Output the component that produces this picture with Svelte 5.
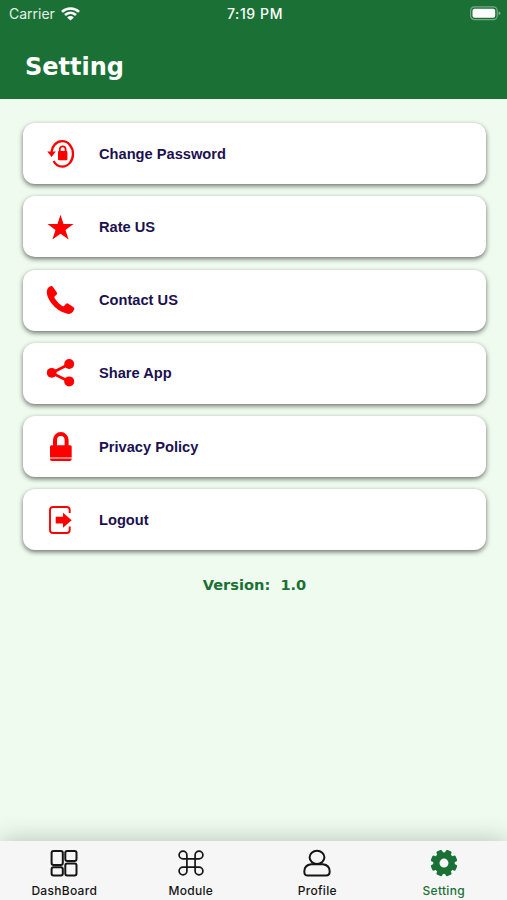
<script>
  let active = 'Setting';

  const options = [
    { icon: 'password', label: 'Change Password' },
    { icon: 'star', label: 'Rate US' },
    { icon: 'phone', label: 'Contact US' },
    { icon: 'share', label: 'Share App' },
    { icon: 'lock', label: 'Privacy Policy' },
    { icon: 'logout', label: 'Logout' }
  ];

  const tabs = ['DashBoard', 'Module', 'Profile', 'Setting'];
</script>

<div class="screen">
  <header>
    <div class="status">
      <div class="carrier">
        <span>Carrier</span>
        <svg width="19" height="14" viewBox="0 0 18 14" preserveAspectRatio="none" fill="none" stroke="#fff" stroke-width="2.5">
          <path d="M.9 4.9C5.5.5 12.5.5 17.1 4.9M3.8 8C7 5 11 5 14.2 8" />
          <path d="M9 13.600L5.800 10.400Q9 7.800 12.200 10.400Z" fill="#fff" stroke="none" />
        </svg>
      </div>
      <time>7:19 PM</time>
      <svg class="battery" width="31" height="15" viewBox="0 0 31 15">
        <rect x=".6" y=".8" width="26.6" height="12.8" rx="3.8" fill="none" stroke="#fff" stroke-opacity=".4" stroke-width="1.2" />
        <rect x="2.5" y="2.7" width="22.7" height="9" rx="2" fill="#fff" />
        <path d="M28.6 5.2Q30.3 6 30.3 7.2T28.6 9.2Z" fill="#fff" fill-opacity=".5" />
      </svg>
    </div>
    <h1>Setting</h1>
  </header>

  <main>
    {#each options as option}
    <button class="option">
      <svg width="30" height="30" viewBox="0 0 30 30" fill="red">
        {#if option.icon == 'password'}
        <path d="M5.500 13C6 7 10.500 2.200 16.300 2.200C22.200 2.200 27 7.900 27 14.900S22.200 27.600 16.300 27.600C12.600 27.600 9.400 25.500 7.600 22" fill="none" stroke="red" stroke-width="2.300" />
        <path d="M1.300 12.500H9.800L5.600 18Z" />
        <rect x="12" y="12" width="9.400" height="9.300" rx="1" />
        <path d="M13.800 12.500V10.200A2.900 2.900 0 0 1 19.600 10.200V12.500" fill="none" stroke="red" stroke-width="1.800" />
        {:else if option.icon == 'star'}
        <path d="M14.500 2.700L17.500 12H27.500L19.500 17.900L22.600 27.600L14.500 21.700L6.400 27.600L9.500 17.900L1.500 12H11.500Z" />
        {:else if option.icon == 'phone'}
        <path d="M2.700 2.300L4.500 1.200Q6 .6 7 2L10.700 7.200Q11.600 8.700 10.300 9.900L8.700 11.300Q8 12.300 8.800 13.600Q11.800 18.300 16.200 21Q17.400 21.600 18.300 20.700L19.900 18.900Q21 17.900 22.400 18.700L27.600 22.200Q28.900 23.300 28.100 24.700L26.700 26.900Q24.700 29.300 21.400 28.800Q12 27 5.200 18.100Q1.100 12.300.7 6.900Q.7 4 2.700 2.300Z" />
        {:else if option.icon == 'share'}
        <path d="M23.300 6L5.700 15L23.300 23.500" fill="none" stroke="red" stroke-width="2.700" />
        <circle cx="5.700" cy="14.800" r="4.900" />
        <circle cx="23.200" cy="6" r="5" />
        <circle cx="23.200" cy="23.400" r="5" />
        {:else if option.icon == 'lock'}
        <path d="M9 15V8A5.700 5.800 0 0 1 20.600 8V15" fill="none" stroke="red" stroke-width="4" />
        <path d="M5.500 13.300H24.200Q25.700 13.300 25.700 14.800V25.500H4V14.800Q4 13.300 5.500 13.300ZM4 26.600H25.700V27Q25.700 29 23.700 29H6Q4 29 4 27Z" />
        {:else}
        <path d="M23.700 8V5Q23.700 2 20.700 2H7Q4 2 4 5V25Q4 28 7 28H20.700Q23.700 28 23.700 25V21.500" fill="none" stroke="red" stroke-width="1.900" />
        <path d="M9.700 11.700H17V7.700L25.700 15.200L17 22.700V18.400H9.700Z" />
        {/if}
      </svg>
      <span>{option.label}</span>
    </button>
    {/each}
    <p class="version">Version:&nbsp; 1.0</p>
  </main>

  <nav>
    {#each tabs as tab}
    <button class="tab" class:active={tab == active} on:click={() => active = tab}>
      <svg width="28" height="28" viewBox="0 0 28 28" fill="none" stroke="currentColor" stroke-width="2">
        {#if tab == 'DashBoard'}
        <rect x="1.600" y="1.900" width="11.200" height="14" rx="1.900" />
        <rect x="15.300" y="1.900" width="11.200" height="10.100" rx="1.900" />
        <rect x="1.600" y="18.200" width="11.200" height="8.300" rx="1.900" />
        <rect x="15.300" y="14.400" width="11.200" height="12.100" rx="1.900" />
        {:else if tab == 'Module'}
        <path d="M9.900 9.900H18.100V18.100H9.900ZM9.900 9.900V6A3.900 3.900 0 1 0 6 9.900H9.900M18.100 9.900H22A3.900 3.900 0 1 0 18.100 6V9.900M18.100 18.100V22A3.900 3.900 0 1 0 22 18.100H18.100M9.900 18.100H6A3.900 3.900 0 1 0 9.900 22V18.100" stroke-width="1.700" />
        {:else if tab == 'Profile'}
        <ellipse cx="14" cy="8.300" rx="7.400" ry="6.600" />
        <path d="M8.200 15.300H19.800C24 15.800 26.700 18.300 26.700 22.500C26.700 25.500 25.700 26.500 23 26.500H5C2.300 26.500 1.300 25.500 1.300 22.500C1.300 18.300 4 15.800 8.200 15.300Z" />
        {:else}
        <g fill="currentColor" stroke="none">
          <path fill-rule="evenodd" d="M14 3.300A10.800 10.800 0 1 0 14 24.900A10.800 10.800 0 1 0 14 3.300ZM14 9.600A4.500 4.500 0 1 1 14 18.600A4.500 4.500 0 1 1 14 9.600Z" />
          {#each [22.5, 67.5, 112.5, 157.5, 202.5, 247.5, 292.5, 337.5] as angle}
          <rect x="10.900" y="0.700" width="6.200" height="5" rx="1.500" transform={`rotate(${angle} 14 14.100)`} />
          {/each}
        </g>
        {/if}
      </svg>
      <span>{tab}</span>
    </button>
    {/each}
  </nav>
</div>

<style>
:global(body) {
  background: #effbef;
}
.screen {
  display: flex;
  flex-direction: column;
  height: 100vh;
  overflow: hidden;
  background: #effbef;
  font-family: "Liberation Sans", Arial, sans-serif;
}
button {
  border: 0;
  padding: 0;
  font: inherit;
}
header {
  box-sizing: border-box;
  flex: none;
  height: 98.5px;
  background: #1b7135;
  color: #fff;
}
.status {
  display: grid;
  grid-template-columns: 1fr auto 1fr;
  align-items: center;
  height: 27px;
  padding: 0 6px 0 9px;
  font: 14px/27px Inter, sans-serif;
}
.carrier {
  display: flex;
  align-items: center;
  gap: 6px;
  color: #e3f0e5;
}
time {
  font-weight: 500;
  letter-spacing: .6px;
}
.battery {
  justify-self: end;
}
h1 {
  margin: 0;
  padding: 25px 25px 0;
  font: bold 24px/30px Verdana, "DejaVu Sans", sans-serif;
}
main {
  flex: 1;
  display: flex;
  flex-direction: column;
  gap: 12.3px;
  padding: 24.5px 21px 0 23px;
}
.option {
  display: flex;
  align-items: center;
  gap: 23px;
  flex: none;
  height: 61px;
  padding-left: 23px;
  border-radius: 12px;
  background: #fff;
  box-shadow: 0 2px 5px rgba(0, 0, 0, .55);
  color: #1b1150;
  font-size: 14.65px;
  font-weight: bold;
}
.option svg {
  flex: none;
}
.version {
  margin: 12px 0 0;
  color: #1b7135;
  text-align: center;
  font: bold 14.6px/20px Verdana, "DejaVu Sans", sans-serif;
}
nav {
  display: grid;
  grid-template-columns: repeat(4, 126.5px);
  flex: none;
  height: 59px;
  padding-left: 1px;
  box-shadow: 0 0 26px rgba(0, 0, 0, .24);
  background: #f6f6f6;
}
.tab {
  display: flex;
  flex-direction: column;
  align-items: center;
  padding-top: 8px;
  background: none;
  color: #151515;
  font: 500 12px/16px Inter, sans-serif;
  letter-spacing: .3px;
}
.tab span {
  margin-top: 6px;
}
.tab.active {
  color: #1b7135;
}
</style>
